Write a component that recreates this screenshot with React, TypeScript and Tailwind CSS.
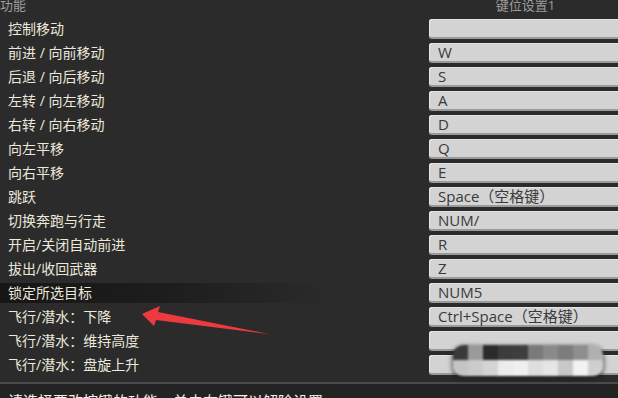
import React from 'react';

const rows: { label: string; key: string }[] = [
  { label: '控制移动', key: '' },
  { label: '前进 / 向前移动', key: 'W' },
  { label: '后退 / 向后移动', key: 'S' },
  { label: '左转 / 向左移动', key: 'A' },
  { label: '右转 / 向右移动', key: 'D' },
  { label: '向左平移', key: 'Q' },
  { label: '向右平移', key: 'E' },
  { label: '跳跃', key: 'Space（空格键）' },
  { label: '切换奔跑与行走', key: 'NUM/' },
  { label: '开启/关闭自动前进', key: 'R' },
  { label: '拔出/收回武器', key: 'Z' },
  { label: '锁定所选目标', key: 'NUM5' },
  { label: '飞行/潜水：下降', key: 'Ctrl+Space（空格键）' },
  { label: '飞行/潜水：维持高度', key: '' },
  { label: '飞行/潜水：盘旋上升', key: '' },
];

// mosaic blocks covering the blurred part (top row dark, bottom row light)
const mosaicTop = ['#3a3a3a', '#9a9a9a', '#2a2a2a', '#3c3c3c', '#3e3e3e', '#7a7a7a', '#8a8a8a', '#7c7c7c', '#8e8e8e', '#b0b0b0'];
const mosaicBottom = ['#c4c4c4', '#cbcbcb', '#d4d4d4', '#ececec', '#f0f0f0', '#dedede', '#e6e6e6', '#c8c8c8', '#f2f2f2', '#cfcfcf'];

export default function App() {
  return (
    <div
      className="relative w-[618px] h-[398px] overflow-hidden bg-[#2b2b2b] text-[14px]"
      style={{ fontFamily: '"Open Sans", "Noto Sans CJK SC", sans-serif' }}
    >
      {/* header */}
      <div className="flex h-[17px] items-start leading-[14px] text-[13px] text-[#9d9d9d]">
        <div className="w-[429px] shrink-0 -mt-[2px]">功能</div>
        <div className="w-[193px] shrink-0 -mt-[2px] text-center">键位设置1</div>
      </div>

      {/* rows */}
      {rows.map((r, i) => (
        <div key={i} className="flex h-6 items-center">
          <div className="w-[429px] shrink-0 h-5 flex items-center">
            <div
              className={
                'h-5 flex items-center pl-2 text-[#ece8dc] leading-none ' +
                (r.label === '锁定所选目标'
                  ? 'w-[330px] bg-gradient-to-r from-[#161616] via-[#1d1d1d] to-transparent'
                  : '')
              }
            >
              {r.label}
            </div>
          </div>
          <div className="w-[193px] shrink-0 h-5 rounded-[3px] bg-[#d3d3d3] border-b-2 border-[#9a9a9a] shadow-[inset_1px_1px_0_#e4e4e4] flex items-center pl-[9px] text-[#3a3a3a] text-[15px] leading-none">
            {r.key}
          </div>
        </div>
      ))}

      {/* footer */}
      <div className="mt-[5px] h-[2px] bg-[#4a4a4a]" />
      <div className="h-[20px] bg-[#232323] pl-2 pt-[9px] text-[#f2f2f2] text-[15px] leading-[16px] whitespace-nowrap">
        请选择要改按键的功能，单击右键可以解除设置
      </div>

      {/* mosaic over the last two key boxes */}
      <div className="absolute left-[453px] top-[345px] w-[150px] h-[31px] rounded-[10px] overflow-hidden blur-[1px] shadow-[0_2px_5px_#1a1a1a]">
        <div className="flex h-[15px]">
          {mosaicTop.map((c, i) => (
            <div key={i} className="flex-1" style={{ backgroundColor: c }} />
          ))}
        </div>
        <div className="flex h-[16px]">
          {mosaicBottom.map((c, i) => (
            <div key={i} className="flex-1" style={{ backgroundColor: c }} />
          ))}
        </div>
      </div>

      {/* red arrow */}
      <svg className="absolute left-0 top-0" width="618" height="398" viewBox="0 0 618 398">
        <polygon
          points="142,314 160,306 158,312 269,334 156,320 154,326"
          fill="#ee3a3f"
        />
      </svg>
    </div>
  );
}
